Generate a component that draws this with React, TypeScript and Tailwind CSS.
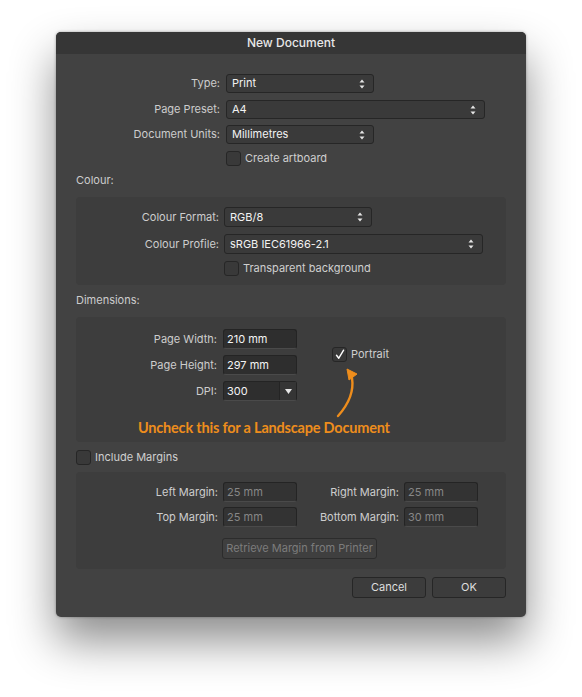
import React from "react";

const font = { fontFamily: "Inter, 'Liberation Sans', sans-serif" };

function Stepper() {
  return (
    <svg width="6" height="10" viewBox="0 0 6 10" className="shrink-0">
      <path d="M3 0.5 L5.5 3.5 L0.5 3.5 Z" fill="#e6e6e6" />
      <path d="M3 9.5 L5.5 6.5 L0.5 6.5 Z" fill="#e6e6e6" />
    </svg>
  );
}

function Select({ value, width, height = "h-[19px]" }: { value: string; width: string; height?: string }) {
  return (
    <div
      className={`${width} ${height} flex items-center justify-between pl-[5px] pr-[8px] rounded-[3px] bg-[#3a3a3a] border border-[#262626] text-[11px] text-[#f2f2f2]`}
    >
      <span>{value}</span>
      <Stepper />
    </div>
  );
}

function Field({ value, disabled }: { value: string; disabled?: boolean }) {
  return (
    <div
      className={`w-[74px] h-[20px] flex items-center px-[3px] rounded-[3px] border border-[#242424] border-b-[#4a4a4a] text-[11px] ${
        disabled ? "bg-[#333333] text-[#878787]" : "bg-[#2e2e2e] text-[#f4f4f4]"
      }`}
    >
      {value}
    </div>
  );
}

function Check({ label, checked }: { label: string; checked?: boolean }) {
  return (
    <div className="flex items-center gap-[4px] h-[15px]">
      <div className="w-[15px] h-[15px] rounded-[3px] bg-[#393939] border border-[#262626] flex items-center justify-center">
        {checked ? (
          <svg width="10" height="11" viewBox="0 0 10 11">
            <path d="M1.5 6.2 L3.8 9.2 L8.6 1.2" stroke="#ffffff" strokeWidth="1.4" fill="none" strokeLinecap="round" strokeLinejoin="round" />
          </svg>
        ) : null}
      </div>
      <span className="text-[11px] text-[#cfcfcf]">{label}</span>
    </div>
  );
}

function Row({ label, labelW, gap, children }: { label: string; labelW: string; gap: string; children: React.ReactNode }) {
  return (
    <div className={`flex items-center ${gap}`}>
      <span className={`${labelW} text-right text-[11px] text-[#cdcdcd]`}>{label}</span>
      {children}
    </div>
  );
}

export default function App() {
  return (
    <div className="w-[582px] h-[697px] bg-white pt-[32px] pl-[56px]" style={font}>
      <div className="w-[470px] h-[585px] rounded-[5px] overflow-hidden bg-[#424242] shadow-[0_24px_45px_rgba(0,0,0,0.45),0_0_3px_rgba(0,0,0,0.35)] flex flex-col">
        <div className="h-[22px] shrink-0 bg-[#363636] flex items-center justify-center text-[12px] font-medium text-[#e8e8e8]">
          New Document
        </div>

        <div className="flex flex-col px-[20px] pt-[20px]">
          <Row label="Type:" labelW="w-[144px]" gap="gap-[6px]">
            <Select value="Print" width="w-[148px]" />
          </Row>
          <div className="mt-[7px]">
            <Row label="Page Preset:" labelW="w-[144px]" gap="gap-[6px]">
              <Select value="A4" width="w-[259px]" />
            </Row>
          </div>
          <div className="mt-[6px]">
            <Row label="Document Units:" labelW="w-[144px]" gap="gap-[6px]">
              <Select value="Millimetres" width="w-[148px]" />
            </Row>
          </div>
          <div className="mt-[7px] pl-[150px]">
            <Check label="Create artboard" />
          </div>

          <div className="mt-[7px] text-[11px] leading-[14px] text-[#cdcdcd]">Colour:</div>
          <div className="mt-[10px] rounded-[4px] bg-[#3d3d3d] pt-[10px] pb-[9px] flex flex-col">
            <Row label="Colour Format:" labelW="w-[143px]" gap="gap-[5px]">
              <Select value="RGB/8" width="w-[148px]" height="h-[20px]" />
            </Row>
            <div className="mt-[7px]">
              <Row label="Colour Profile:" labelW="w-[143px]" gap="gap-[5px]">
                <Select value="sRGB IEC61966-2.1" width="w-[259px]" height="h-[20px]" />
              </Row>
            </div>
            <div className="mt-[7px] pl-[148px]">
              <Check label="Transparent background" />
            </div>
          </div>

          <div className="mt-[8px] text-[11px] leading-[14px] text-[#cdcdcd]">Dimensions:</div>
          <div className="relative mt-[10px] h-[125px] rounded-[4px] bg-[#3d3d3d] pt-[12px] flex flex-col">
            <div className="flex">
              <div className="flex flex-col gap-[6px]">
                <Row label="Page Width:" labelW="w-[141px]" gap="gap-[6px]">
                  <Field value="210 mm" />
                </Row>
                <Row label="Page Height:" labelW="w-[141px]" gap="gap-[6px]">
                  <Field value="297 mm" />
                </Row>
                <Row label="DPI:" labelW="w-[141px]" gap="gap-[6px]">
                  <div className="w-[74px] h-[20px] flex rounded-[3px] border border-[#242424] border-b-[#4a4a4a] bg-[#2e2e2e] text-[11px] text-[#f4f4f4]">
                    <span className="flex-1 flex items-center px-[3px]">300</span>
                    <span className="w-[17px] flex items-center justify-center border-l border-[#242424] bg-[#353535]">
                      <svg width="7" height="5" viewBox="0 0 7 5">
                        <path d="M0 0 L7 0 L3.5 5 Z" fill="#e6e6e6" />
                      </svg>
                    </span>
                  </div>
                </Row>
              </div>
              <div className="ml-[35px] mt-[18px]">
                <Check label="Portrait" checked />
              </div>
            </div>
            <div
              className="mt-[18px] pl-[62px] text-[14.5px] leading-[18px] font-bold text-[#ee8d1c] tracking-[-0.2px]"
              style={{ fontFamily: "Lato, 'Noto Sans', sans-serif" }}
            >
              Uncheck this for a Landscape Document
            </div>
            <svg className="absolute left-0 top-0 pointer-events-none" width="430" height="125" viewBox="0 0 430 125">
              <path d="M262 99 Q279 80 276 61" stroke="#ee8d1c" strokeWidth="2.4" fill="none" strokeLinecap="round" />
              <path d="M271 52 L281 57 L273 63 Z" fill="#ee8d1c" stroke="#ee8d1c" strokeWidth="1" strokeLinejoin="round" />
            </svg>
          </div>

          <div className="mt-[8px]">
            <Check label="Include Margins" />
          </div>
          <div className="mt-[7px] rounded-[4px] bg-[#3d3d3d] pt-[10px] pb-[10px] flex flex-col">
            <div className="grid grid-cols-[142px_74px_97px_74px] gap-x-[5px] gap-y-[5px] items-center text-[11px] text-[#cdcdcd]">
              <span className="text-right">Left Margin:</span>
              <Field value="25 mm" disabled />
              <span className="text-right">Right Margin:</span>
              <Field value="25 mm" disabled />
              <span className="text-right">Top Margin:</span>
              <Field value="25 mm" disabled />
              <span className="text-right">Bottom Margin:</span>
              <Field value="30 mm" disabled />
            </div>
            <div className="mt-[11px] pl-[146px]">
              <div className="w-[155px] h-[21px] flex items-center justify-center rounded-[3px] border border-[#2c2c2c] bg-[#3f3f3f] text-[11px] text-[#7c7c7c]">
                Retrieve Margin from Printer
              </div>
            </div>
          </div>

          <div className="mt-[8px] flex justify-end gap-[6px]">
            <div className="w-[74px] h-[21px] flex items-center justify-center rounded-[3px] border border-[#262626] bg-[#3c3c3c] text-[11px] text-[#dedede]">
              Cancel
            </div>
            <div className="w-[74px] h-[21px] flex items-center justify-center rounded-[3px] border border-[#262626] bg-[#3c3c3c] text-[11px] text-[#dedede]">
              OK
            </div>
          </div>
        </div>
      </div>
    </div>
  );
}
